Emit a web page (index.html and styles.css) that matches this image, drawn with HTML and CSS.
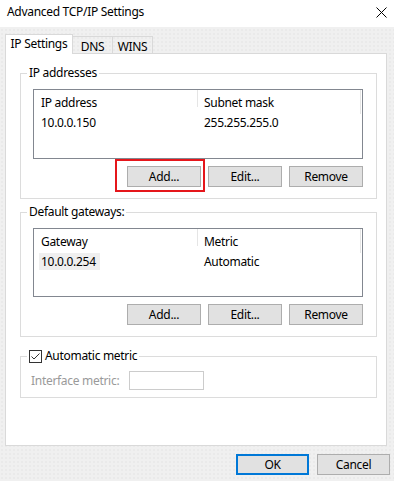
FILE: index.html
```html
<!DOCTYPE html>
<html>
<head>
<meta charset="utf-8">
<title>Advanced TCP/IP Settings</title>
<link rel="stylesheet" href="styles.css">
</head>
<body>
<div class="dialog">
  <div class="titlebar">
    <span class="title">Advanced TCP/IP Settings</span>
    <svg class="close" width="11" height="11" viewBox="0 0 11 11"><path d="M0.5 0.5 L10.5 10.5 M10.5 0.5 L0.5 10.5" stroke="#000" stroke-width="1" fill="none"/></svg>
  </div>
  <div class="content">
    <div class="tabs">
      <div class="tab active">IP Settings</div>
      <div class="tab">DNS</div>
      <div class="tab">WINS</div>
    </div>
    <div class="panel">
      <fieldset class="group">
        <legend>IP addresses</legend>
        <div class="list list-ip">
          <div class="lhead">
            <div class="hcell c1">IP address</div>
            <div class="hcell c2">Subnet mask</div>
          </div>
          <div class="lrow">
            <div class="rcell c1">10.0.0.150</div>
            <div class="rcell c2">255.255.255.0</div>
          </div>
        </div>
        <div class="btnrow">
          <button class="btn">Add...</button>
          <button class="btn">Edit...</button>
          <button class="btn">Remove</button>
        </div>
      </fieldset>
      <fieldset class="group group-gw">
        <legend>Default gateways:</legend>
        <div class="list list-gw">
          <div class="lhead">
            <div class="hcell c1">Gateway</div>
            <div class="hcell c2">Metric</div>
          </div>
          <div class="lrow">
            <div class="rcell c1 sel"><span class="selitem">10.0.0.254</span></div>
            <div class="rcell c2">Automatic</div>
          </div>
        </div>
        <div class="btnrow">
          <button class="btn">Add...</button>
          <button class="btn">Edit...</button>
          <button class="btn">Remove</button>
        </div>
      </fieldset>
      <fieldset class="group group-metric">
        <legend class="checklegend">
          <svg class="checkbox" width="13" height="13" viewBox="0 0 13 13"><rect x="0.5" y="0.5" width="12" height="12" fill="#fff" stroke="#333"/><path d="M2.5 6.5 L5 9 L10.5 3.5" stroke="#333" stroke-width="1" fill="none"/></svg>
          <span>Automatic metric</span>
        </legend>
        <div class="metricrow">
          <span class="disabled-label">Interface metric:</span>
          <span class="metricinput"></span>
        </div>
      </fieldset>
    </div>
  </div>
  <div class="footer">
    <button class="btn btn-default">OK</button>
    <button class="btn">Cancel</button>
  </div>
  <div class="highlight"></div>
</div>
</body>
</html>
```

FILE: styles.css
```css
* { box-sizing: border-box; }

html, body {
  margin: 0;
  padding: 0;
}

body {
  width: 394px;
  height: 481px;
  overflow: hidden;
  background-color: #f0f0f0;
  background-image: radial-gradient(circle, rgba(0,0,0,0.03) 0.6px, transparent 1px);
  background-size: 4px 4px;
  font-family: "Noto Sans", "Open Sans", sans-serif;
  font-size: 12px;
  letter-spacing: -0.3px;
  color: #000;
}

.dialog {
  position: relative;
  width: 394px;
  height: 481px;
}

.titlebar {
  height: 27px;
  background: #fff;
  display: flex;
  align-items: center;
  justify-content: space-between;
  padding: 0 7px 3px 7px;
}

.title {
  font-size: 12px;
  line-height: 16px;
}

.close {
  display: block;
}

.content {
  padding: 7px 0 0 5px;
}

.tabs {
  display: flex;
  align-items: flex-end;
  height: 19px;
}

.tab {
  height: 17px;
  line-height: 15px;
  padding-top: 2px;
  text-align: center;
  border: 1px solid #d9d9d9;
  border-bottom: none;
  border-left: none;
  background: transparent;
}

.tab:nth-child(2) { width: 40px; }
.tab:nth-child(3) { width: 40px; }

.tab.active {
  position: relative;
  z-index: 1;
  width: 68px;
  height: 20px;
  line-height: 18px;
  padding-top: 0;
  margin-bottom: -1px;
  border-left: 1px solid #d9d9d9;
  background: #fff;
}

.panel {
  width: 382px;
  height: 393px;
  background: #fff;
  border: 1px solid #d9d9d9;
  padding: 11px 9px 0 14px;
}

.group {
  margin: 0;
  min-width: 0;
  border: 1px solid #dcdcdc;
  padding: 0 13px 11px 12px;
}

.group legend {
  padding: 0 2px;
  margin-left: -6px;
  line-height: 16px;
  height: 16px;
  font-size: 12px;
}

.group-gw {
  margin-top: 5px;
}

.group-metric {
  margin-top: 11px;
  padding: 0 10px 7px 10px;
}

.group-metric legend {
  margin-left: -4px;
}

.checklegend {
  display: flex;
  align-items: center;
  gap: 3px;
}

.checkbox {
  display: block;
}

.list {
  margin-top: 8px;
  height: 70px;
  border: 1px solid #828790;
  background: #fff;
}

.list-gw {
  height: 69px;
}

.lhead {
  display: flex;
  height: 24px;
}

.hcell {
  height: 24px;
  line-height: 16px;
  padding-top: 5px;
  white-space: nowrap;
}

.c1 { width: 164px; padding-left: 7px; }
.c2 { width: 163px; padding-left: 6px; }

.hcell.c1 {
  background: linear-gradient(#e5e5e5, #e5e5e5) right top / 1px 17px no-repeat;
}

.hcell.c2 {
  background: linear-gradient(#e5e5e5, #e5e5e5) right top / 1px 24px no-repeat;
}

.lrow {
  display: flex;
  height: 17px;
  line-height: 17px;
}

.rcell {
  white-space: nowrap;
}

.rcell.sel {
  padding-left: 5px;
}

.selitem {
  display: inline-block;
  height: 17px;
  padding: 0 4px 0 2px;
  background: #efefef;
}

.btnrow {
  margin-top: 7px;
  display: flex;
  justify-content: flex-end;
  gap: 7px;
}

.btn {
  width: 74px;
  height: 21px;
  margin: 0;
  padding: 0;
  background: #e1e1e1;
  border: 1px solid #adadad;
  font-family: "Noto Sans", "Open Sans", sans-serif;
  font-size: 12px;
  letter-spacing: -0.3px;
  line-height: 17px;
  color: #000;
}

.metricrow {
  margin-top: 7px;
  display: flex;
  align-items: center;
}

.disabled-label {
  width: 98px;
  color: #9a9a9a;
  white-space: nowrap;
}

.metricinput {
  display: block;
  width: 75px;
  height: 19px;
  border: 1px solid #cccccc;
  background: #fff;
}

.footer {
  display: flex;
  justify-content: flex-end;
  gap: 8px;
  padding: 8px 4px 0 0;
}

.footer .btn {
  width: 73px;
}

.btn-default {
  border: 2px solid #0078d7;
}

.highlight {
  position: absolute;
  left: 115px;
  top: 159px;
  width: 90px;
  height: 33px;
  border: 2px solid #e5161b;
}
```
